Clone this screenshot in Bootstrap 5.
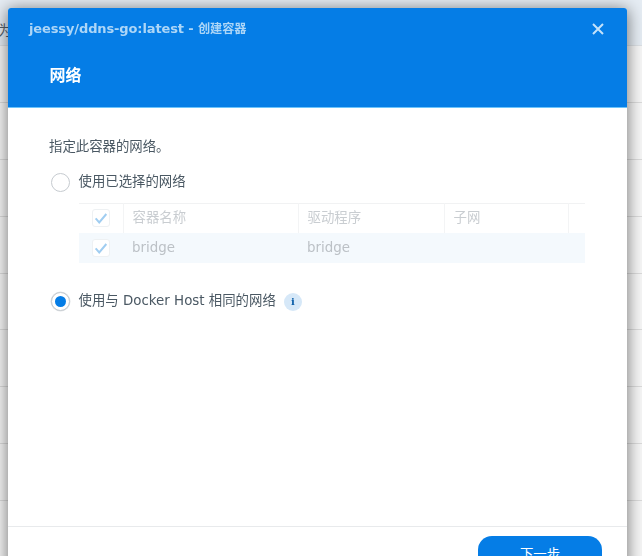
<!DOCTYPE html>
<html lang="zh">
<head>
<meta charset="utf-8">
<title>创建容器</title>
<link href="https://cdn.jsdelivr.net/npm/bootstrap@5.3.0/dist/css/bootstrap.min.css" rel="stylesheet">
<style>
html,body{height:100%;overflow:hidden}
body{background:#f6f6f6;font-family:"DejaVu Sans","Noto Sans CJK SC",sans-serif;font-size:13.4px;color:#4a5863;position:relative}
.bg-band{height:46px;background:#e6edf4;color:#55606a;font-size:14px;line-height:60px;border-bottom:1px solid #dde1e5;overflow:hidden;white-space:nowrap}
.bg-band span{margin-left:-2px}
.bg-row{height:56.9px;border-bottom:1px solid #dcdcdc;background:#f7f7f7}
.dlg{position:absolute;left:8px;top:8px;width:619px;height:600px;background:#fff;border-radius:3px 3px 0 0;box-shadow:0 2px 16px 1px rgba(0,0,0,.5);overflow:hidden;filter:blur(.3px)}
.dlg-head{background:#057de6;height:100px;border-bottom:1px solid #6cc4fb;padding:12px 21px 0 21px;color:#fff}
.dlg-title{font-size:13px;font-weight:700;color:#add6f7;line-height:18px;letter-spacing:-.12px}
.dlg-title span{font-size:12.2px}
.dlg-close{width:12px;height:12px;margin-right:2px;margin-top:3px;display:block}
.dlg-step{font-size:16px;font-weight:700;line-height:24px;margin:26px 0 0 20.5px}
.dlg-body{padding:29px 41px 0 41px}
.intro{line-height:20px;margin-bottom:14px}
.pick{gap:9px;height:22px}
.pick-dot{width:19px;height:19px;border:1.5px solid #c6cbd0;border-radius:50%;background:#fff;flex:none;margin-left:1.5px;display:flex;align-items:center;justify-content:center}
.pick-dot.on{box-shadow:0 0 0 .5px #dfe3e6}
.pick-dot.on i{display:block;width:11px;height:11px;border-radius:50%;background:#057de6}
.net-table{width:506px;margin:10px 0 0 30px;border-collapse:collapse;table-layout:fixed;color:#c9cdd1;border-top:1px solid #f1f2f3}
.net-table td,.net-table th{padding:0 0 0 9px;font-weight:400;font-size:13.4px;line-height:1;background:transparent;color:inherit;border:0;vertical-align:middle}
.net-table th{height:29px;border-right:1px solid #f3f4f5;padding-bottom:1px}
.net-table td{height:30px;padding-top:1px}
.net-table tr.sel td{background:#f4f9fd;color:#bcc1c6}
.net-table .cc{padding:0 0 0 13px}
.tick{width:18px;height:18px;display:block;background:#fff;border:1px solid #eef1f3;border-radius:3px}
.pick-lower{margin-top:28px}
.hint{width:18px;height:18px;border-radius:50%;background:#d6e8f8;color:#0b5ea8;font:700 10px/18px "DejaVu Serif",serif;text-align:center;margin-left:-1px}
.dlg-foot{position:absolute;left:0;right:0;top:518px;border-top:1px solid #e8eaec;padding:9px 25px 0 0}
.next-btn{width:124px;height:40px;background:#057de6;border:0;color:#fff;font-size:13.4px;padding:0 0 3px;border-radius:14px;line-height:28px}
</style>
</head>
<body>
<div class="bg-band"><span>为</span></div>
<div class="bg-row"></div><div class="bg-row"></div><div class="bg-row"></div><div class="bg-row"></div><div class="bg-row"></div><div class="bg-row"></div><div class="bg-row"></div><div class="bg-row"></div>

<div class="dlg">
  <div class="dlg-head">
    <div class="d-flex justify-content-between align-items-start">
      <div class="dlg-title">jeessy/ddns-go:latest - <span>创建容器</span></div>
      <svg class="dlg-close" viewBox="0 0 12 12"><path d="M1 1l10 10M11 1L1 11" stroke="#c4e2fa" stroke-width="2" fill="none"/></svg>
    </div>
    <div class="dlg-step">网络</div>
  </div>
  <div class="dlg-body">
    <div class="intro">指定此容器的网络。</div>
    <div class="d-flex align-items-center pick"><span class="pick-dot"></span><span>使用已选择的网络</span></div>
    <table class="table net-table mb-0">
      <colgroup><col style="width:44px"><col style="width:175px"><col style="width:146px"><col style="width:124px"><col></colgroup>
      <tr>
        <th class="cc"><svg class="tick" viewBox="0 0 18 18"><path d="M3 9.5l4 4.5 8-9.5" stroke="#a0cdf1" stroke-width="2.2" fill="none"/></svg></th>
        <th>容器名称</th><th>驱动程序</th><th>子网</th><th class="border-0"></th>
      </tr>
      <tr class="sel">
        <td class="cc"><svg class="tick" viewBox="0 0 18 18"><path d="M3 9.5l4 4.5 8-9.5" stroke="#a0cdf1" stroke-width="2.2" fill="none"/></svg></td>
        <td>bridge</td><td>bridge</td><td></td><td></td>
      </tr>
    </table>
    <div class="d-flex align-items-center pick pick-lower"><span class="pick-dot on"><i></i></span><span>使用与 Docker Host 相同的网络</span><span class="hint">i</span></div>
  </div>
  <div class="dlg-foot d-flex justify-content-end"><button class="btn next-btn" type="button">下一步</button></div>
</div>
<script src="https://cdn.jsdelivr.net/npm/bootstrap@5.3.0/dist/js/bootstrap.bundle.min.js"></script>
</body>
</html>
